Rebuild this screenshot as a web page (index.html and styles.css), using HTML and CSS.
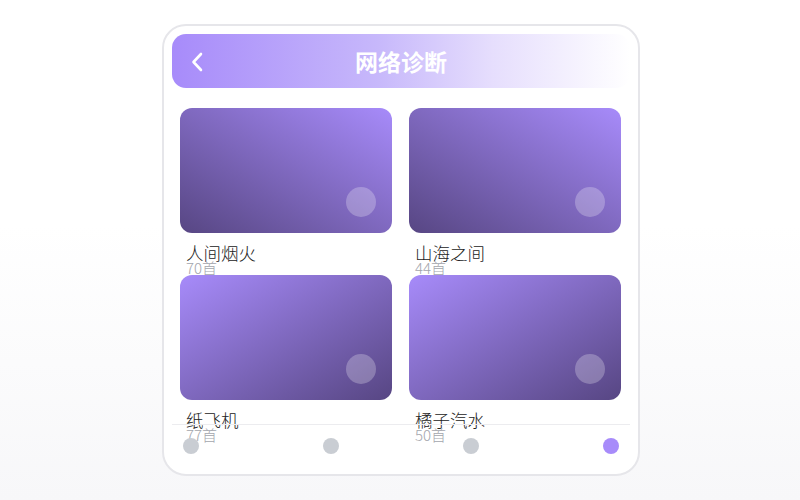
FILE: index.html
```html
<!DOCTYPE html>
<html lang="zh-CN">

<head>
  <meta charset="UTF-8" />
  <meta name="viewport" content="width=device-width, initial-scale=1" />
  <title>网络诊断</title>
  <link rel="stylesheet" href="styles.css">
</head>

<body>
  <div class="phone">
    <div class="header">
      <svg class="back" width="12" height="20" viewBox="0 0 12 20">
        <path d="M10 2 L2.5 10 L10 18" fill="none" stroke="#fff" stroke-width="2.6" stroke-linecap="round" stroke-linejoin="round" />
      </svg>
      <h1>网络诊断</h1>
      <span></span>
    </div>

    <div class="albums">
      <div class="album">
        <div class="cover cover-a"><span class="play"></span></div>
        <p class="name">人间烟火</p>
        <p class="count">70首</p>
      </div>
      <div class="album">
        <div class="cover cover-a"><span class="play"></span></div>
        <p class="name">山海之间</p>
        <p class="count">44首</p>
      </div>
      <div class="album">
        <div class="cover cover-b"><span class="play"></span></div>
        <p class="name">纸飞机</p>
        <p class="count">77首</p>
      </div>
      <div class="album">
        <div class="cover cover-b"><span class="play"></span></div>
        <p class="name">橘子汽水</p>
        <p class="count">50首</p>
      </div>
    </div>

    <!-- bottom tabs -->
    <div class="tabs">
      <span class="dot"></span>
      <span class="dot"></span>
      <span class="dot"></span>
      <span class="dot active"></span>
    </div>
  </div>
</body>

</html>
```

FILE: styles.css
```css
body {
  margin: 0;
  padding-left: 2px;
  height: 500px;
  display: flex;
  align-items: center;
  justify-content: center;
  font-family: "Noto Sans CJK SC", "Noto Sans", sans-serif;
  background: linear-gradient(180deg, #ffffff 45%, #f7f7f9 100%);
}

.phone {
  position: relative;
  box-sizing: border-box;
  width: 478px;
  height: 452px;
  padding: 8px;
  border: 2px solid #e6e6ea;
  border-radius: 24px;
  background: #fff;
  overflow: hidden;
}

.header {
  display: grid;
  grid-template-columns: 40px 1fr 40px;
  align-items: center;
  height: 54px;
  padding: 0 19px;
  border-radius: 14px;
  background: linear-gradient(90deg, #a78bfa 0%, #c7b8fb 45%, #e6defd 70%, #ffffff 100%);
}

.back {
  display: block;
  margin-top: 1px;
}

.header h1 {
  margin: 0;
  text-align: center;
  color: #fff;
  font-size: 23px;
  font-weight: bold;
  line-height: 1;
}

.albums {
  display: grid;
  grid-template-columns: 1fr 1fr;
  grid-auto-rows: 167px;
  column-gap: 17px;
  margin-top: 20px;
  padding: 0 9px 0 8px;
}

.album {
  height: 167px;
}

.cover {
  position: relative;
  height: 125px;
  border-radius: 12px;
}

.cover-a {
  background: linear-gradient(to bottom left, #a78bfa, #574683);
}

.cover-b {
  background: linear-gradient(to bottom right, #a78bfa, #574683);
}

.play {
  position: absolute;
  right: 16px;
  bottom: 16px;
  width: 30px;
  height: 30px;
  border-radius: 50%;
  background: rgba(255, 255, 255, 0.25);
}

.name {
  margin: 11px 0 0 6px;
  font-size: 17.5px;
  line-height: 17px;
  font-weight: 300;
  color: #222;
}

.count {
  margin: 0 0 0 6px;
  font-size: 15px;
  line-height: 14px;
  font-weight: 300;
  color: #a3a6ad;
}

.tabs {
  position: absolute;
  left: 8px;
  right: 8px;
  bottom: 12px;
  display: flex;
  justify-content: space-between;
  padding: 13px 11px 8px;
  border-top: 1px solid #ececef;
}

.dot {
  width: 16px;
  height: 16px;
  border-radius: 50%;
  background: #c9cdd3;
}

.dot.active {
  background: #a78bfa;
}
```
